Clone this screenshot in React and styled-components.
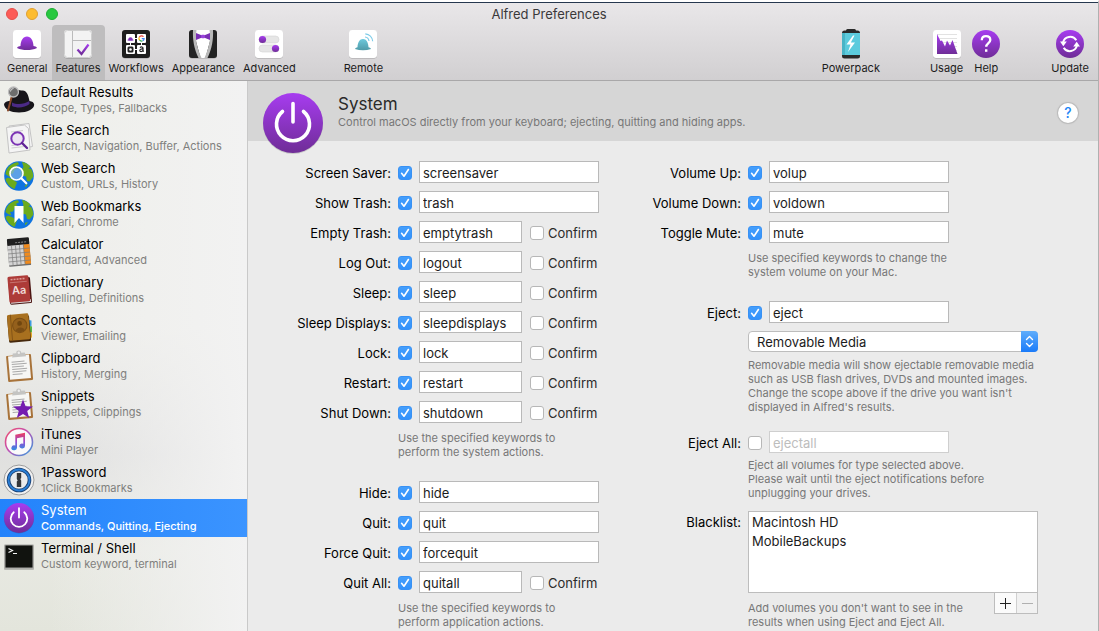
import React from "react";
import styled, { createGlobalStyle, css } from "styled-components";

const GlobalStyle = createGlobalStyle`
  *, *::before, *::after { box-sizing: border-box; }
  body {
    margin: 0;
    background: #ebebeb;
    color: #111;
    font: 13px/16px Inter, "Liberation Sans", sans-serif;
  }
  button, input, select { font: inherit; color: inherit; }
  svg { display: block; }
`;

const Window = styled.div`
  display: flex;
  flex-direction: column;
  min-height: 100vh;
  border-top: 2px solid #fff;
  border-right: 1px solid #b0b0b0;
`;

/* Title bar and toolbar */

const Chrome = styled.header`
  background: linear-gradient(#e9e7e9, #d1cfd1);
  border-top: 1px solid #26384f;
  border-bottom: 1px solid #a9a8a9;
`;

const TitleBar = styled.div`
  display: grid;
  grid-template-columns: 1fr auto 1fr;
  align-items: center;
  height: 22px;
  padding: 0 6px;
`;

const Lights = styled.div`
  display: flex;
  gap: 8px;
`;

const Light = styled.button`
  width: 12px;
  height: 12px;
  padding: 0;
  border: 1px solid ${(p) => p.$edge};
  border-radius: 50%;
  background: ${(p) => p.$color};
`;

const WindowTitle = styled.h1`
  margin: 0;
  font-size: 13px;
  line-height: 16px;
  font-weight: 400;
  color: #3a393a;
`;

const Toolbar = styled.nav`
  display: flex;
  height: 55px;
  padding: 0 5px 0 3px;
`;

const Tool = styled.button`
  display: flex;
  flex-direction: column;
  align-items: center;
  gap: 1px;
  padding: 4px 4px 0;
  border: 0;
  border-radius: 4px 4px 0 0;
  background: ${(p) => (p.$active ? "#bebdbe" : "none")};
  font-size: 11px;
  line-height: 16px;
  color: #1c1c1c;
`;

const ToolGap = styled.div`
  width: ${(p) => (p.$wide ? "42px" : "40px")};
`;

const ToolSpring = styled.div`
  flex: 1;
`;

/* Sidebar */

const Body = styled.div`
  display: flex;
  flex: 1;
`;

const Sidebar = styled.nav`
  flex: none;
  width: 248px;
  border-right: 1px solid #c9c9c9;
  background:
    linear-gradient(90deg, rgba(243, 243, 242, 0) 20%, #f2f2f2),
    linear-gradient(#eeefea, #eeeeea 45%, #e0e0df 68%, #e8e9e2 85%, #e3e5dc);
`;

const NavButton = styled.button`
  display: flex;
  align-items: center;
  gap: 7px;
  width: 100%;
  height: 38px;
  padding: 0 0 0 4px;
  border: 0;
  background: none;
  text-align: left;
  color: #000;
  ${(p) =>
    p.$active &&
    css`
      background: linear-gradient(90deg, #2383fb, #3b94ff);
      color: #fff;
    `}
`;

const NavText = styled.span`
  display: flex;
  flex-direction: column;
`;

const NavSub = styled.small`
  font-size: 11px;
  font-weight: ${(p) => (p.$active ? 500 : 400)};
  line-height: 16px;
  color: ${(p) => (p.$active ? "#fff" : "#7f7f7d")};
`;

/* Content */

const Content = styled.main`
  flex: 1;
  min-width: 0;
`;

const Banner = styled.section`
  display: flex;
  align-items: flex-start;
  height: 60px;
  padding: 12px 20px 0 15px;
  background: #d6d6d6;
`;

const BannerText = styled.div`
  flex: 1;
  padding-left: 15px;
`;

const Heading = styled.h2`
  margin: 0;
  font-size: 17px;
  line-height: 22px;
  font-weight: 400;
  color: #2a2a2a;
`;

const Summary = styled.p`
  margin: 0;
  font-size: 11px;
  line-height: 14px;
  color: #777;
`;

const HelpButton = styled.button`
  width: 20px;
  height: 20px;
  margin-top: 10px;
  padding: 0;
  border: 0;
  border-radius: 50%;
  background: #fff;
  box-shadow: 0 0 1px 1px #b9b9b9;
  font-size: 14px;
  font-weight: 500;
  line-height: 20px;
  color: #1d86f5;
`;

const Form = styled.form`
  display: grid;
  grid-template-columns: minmax(0, 8fr) minmax(0, 9fr);
  padding-top: 17px;
`;

const Column = styled.div`
  --label: ${(p) => p.$label};
  display: flex;
  flex-direction: column;
`;

const Row = styled.div`
  display: flex;
  align-items: center;
  gap: 7px;
  height: 30px;
`;

const Label = styled.label`
  flex: none;
  width: var(--label);
  text-align: right;
  white-space: nowrap;
  color: #000;
`;

const Indent = styled.div`
  max-width: 290px;
  margin-left: calc(var(--label) + 7px);
  ${(p) =>
    p.$fill &&
    css`
      width: 290px;
    `}
`;

const Note = styled.p`
  margin: 0 0 ${(p) => p.$after || "0"};
  padding-top: ${(p) => p.$before || "3px"};
  font-size: 11px;
  line-height: 14px;
  white-space: nowrap;
  color: #777;
`;

const Field = styled.input`
  width: ${(p) => (p.$short ? "103px" : "180px")};
  height: 22px;
  margin-bottom: 2px;
  padding: 1px 3px 0;
  border: 1px solid #b9b9b9;
  border-radius: 0;
  background: #fff;
  color: #1c1c1c;
  &:disabled {
    border-color: #cfcfcf;
    color: #bdbdbd;
  }
`;

const CheckWrap = styled.span`
  display: grid;
  flex: none;
  width: 14px;
  height: 14px;
  > * { grid-area: 1 / 1; }
  svg { pointer-events: none; }
`;

const CheckInput = styled.input`
  appearance: none;
  width: 14px;
  height: 14px;
  margin: 0;
  border: 1px solid #b7b7b7;
  border-radius: 3px;
  background: #fff;
  &:checked {
    border-color: #3891f4;
    background: linear-gradient(#459ffc, #3392fb);
  }
  & + svg { visibility: hidden; }
  &:checked + svg { visibility: visible; }
`;

const Confirm = styled.label`
  display: flex;
  align-items: center;
  gap: 4px;
  margin-left: 1px;
  color: #2a2a2a;
`;

const SelectWrap = styled.div`
  position: relative;
  display: flex;
  margin-top: 3px;
  svg {
    position: absolute;
    top: 0;
    right: 0;
    pointer-events: none;
  }
`;

const Select = styled.select`
  appearance: none;
  width: 100%;
  height: 21px;
  padding: 0 24px 0 8px;
  border: 1px solid #bdbdbd;
  border-radius: 4px;
  background: #fff;
  color: #1c1c1c;
`;

const ListRow = styled.div`
  display: flex;
  align-items: flex-start;
  gap: 7px;
  margin-top: 11px;
`;

const ListLabel = styled(Label).attrs({ as: "span" })`
  padding-top: 3px;
`;

const List = styled.ul`
  width: 290px;
  height: 82px;
  margin: 0;
  padding: 1px 3px;
  border: 1px solid #bdbdbd;
  background: #fff;
  list-style: none;
  line-height: 19px;
  color: #1c1c1c;
`;

const ListFoot = styled.div`
  display: flex;
  justify-content: space-between;
  align-items: flex-start;
`;

const Stepper = styled.div`
  display: flex;
  border: 1px solid #bdbdbd;
  border-top: 0;
`;

const StepButton = styled.button`
  display: grid;
  place-items: center;
  width: 21px;
  height: 20px;
  padding: 0;
  border: 0;
  background: #fbfbfb;
  color: #222;
  &:disabled {
    border-left: 1px solid #cfcfcf;
    background: #f1f1f1;
    color: #b0b0b0;
  }
`;

/* Drawings */

const DefsSvg = styled.svg`
  position: absolute;
`;

const Defs = () => (
  <DefsSvg width="0" height="0" aria-hidden="true">
    <defs>
      <linearGradient id="violet" x1="0" y1="0" x2="0" y2="1">
        <stop offset="0" stopColor="#a73cf0" />
        <stop offset="1" stopColor="#6f2d97" />
      </linearGradient>
      <linearGradient id="teal" x1="0" y1="0" x2="0" y2="1">
        <stop offset="0" stopColor="#6cc9dc" />
        <stop offset="1" stopColor="#4f9aa8" />
      </linearGradient>
      <linearGradient id="cap" x1="0" y1="0" x2="0" y2="1">
        <stop offset="0" stopColor="#5fadfb" />
        <stop offset="1" stopColor="#1a7bf9" />
      </linearGradient>
      <linearGradient id="tunesRing" x1="0" y1="0" x2="1" y2="1">
        <stop offset="0" stopColor="#f2506a" />
        <stop offset=".45" stopColor="#c14fb4" />
        <stop offset="1" stopColor="#2f9fe0" />
      </linearGradient>
      <linearGradient id="tunesNote" x1="0" y1="0" x2="0" y2="1">
        <stop offset="0" stopColor="#ee3f5c" />
        <stop offset=".5" stopColor="#9a4ad0" />
        <stop offset="1" stopColor="#2c8fe2" />
      </linearGradient>
    </defs>
  </DefsSvg>
);

const Tile = ({ fill = "#fff", children }) => (
  <svg width="30" height="30" viewBox="0 0 30 30">
    <rect x="1" y="1.6" width="28" height="28" rx="3" fill="#000" opacity=".25" />
    <rect x="1" y="1" width="28" height="28" rx="3" fill={fill} />
    {children}
  </svg>
);

const bowler = "M5 19c.6-1.5 2.200-1.800 3.500-2 .2-5.500 2.600-9.500 6.500-9.500s6.300 4 6.500 9.500c1.300.2 2.900.5 3.500 2-3 1.500-6.500 2-10 2s-7-.5-10-2z";

const toolIcons = {
  General: (
    <Tile>
      <path d={bowler} fill="url(#violet)" />
    </Tile>
  ),
  Features: (
    <Tile fill="#f3f3f3">
      <path d="M9.500 1V29M9.500 11.500H29" stroke="#bbb" fill="none" />
      <rect x="1.500" y="1.500" width="27" height="27" rx="3" fill="none" stroke="#cfcfcf" />
      <path d="M14.500 20.500l4 4.500 7-9.500" stroke="url(#violet)" strokeWidth="2.200" fill="none" />
    </Tile>
  ),
  Workflows: (
    <Tile fill="#1e1e1e">
      <path d="M12 9.500h6M12 20.500h6M9.500 12v6M20.500 12v6" stroke="#fff" />
      <g fill="#fff">
        <rect x="5" y="5" width="9" height="9" rx="1" />
        <rect x="16" y="5" width="9" height="9" rx="1" />
        <rect x="5" y="16" width="9" height="9" rx="1" />
        <rect x="16" y="16" width="9" height="9" rx="1" />
      </g>
      <path d="M6.300 11.200c.4-.8 1-.8 1-.8.1-3 4.300-3 4.400 0 0 0 .6 0 1 .8-2 .8-4.400.8-6.400 0z" fill="#8133b8" />
      <path d="M22.500 7.700a2.600 2.600 0 0 0-4.200.5" stroke="#e8453c" fill="none" strokeWidth="1.200" />
      <path d="M18.300 8.200a2.600 2.600 0 0 0 .3 3" stroke="#f4b400" fill="none" strokeWidth="1.200" />
      <path d="M18.600 11.200a2.500 2.500 0 0 0 3 .6" stroke="#34a853" fill="none" strokeWidth="1.200" />
      <path d="M20.800 9.700h2.300c0 .8-.4 1.700-1.300 2.100" stroke="#4285f4" fill="none" strokeWidth="1.200" />
      <rect x="6.500" y="17.500" width="6" height="6" rx="1.500" fill="#222" />
      <circle cx="9.500" cy="20.500" r="1.300" fill="#fff" />
      <path d="M19 18.600c1-1 3-.8 3 .6v2.500l.7 1M22 20c-2-.2-3.200.3-3.200 1.500 0 1.400 2.200 1.600 3.200-.2" stroke="#222" fill="none" strokeWidth="1.200" />
    </Tile>
  ),
  Appearance: (
    <Tile fill="#232323">
      <path d="M5 1h20L17.500 29h-5z" fill="#fff" />
      <path d="M5 1h3.500c-1.500 9 .5 18 5 28h-3C6 20 4.500 10 5 1zM25 1h-3.500c1.500 9-.5 18-5 28h3C24 20 25.500 10 25 1z" fill="#b9b9b9" />
      <path d="M8 4l5.500 2.200h3L22 4v7l-5.500-2.200h-3L8 11z" fill="#7a2fb5" />
      <rect x="13.200" y="5.700" width="3.600" height="3.600" rx=".8" fill="#9a44dc" />
    </Tile>
  ),
  Advanced: (
    <Tile>
      <rect x="5" y="7" width="20" height="7" rx="3.500" fill="#e6e6e6" stroke="#d4d4d4" strokeWidth=".6" />
      <rect x="5" y="16" width="20" height="7" rx="3.500" fill="#e6e6e6" stroke="#d4d4d4" strokeWidth=".6" />
      <circle cx="8.500" cy="10.500" r="3.600" fill="url(#violet)" />
      <circle cx="21.500" cy="19.500" r="3.600" fill="url(#violet)" />
    </Tile>
  ),
  Remote: (
    <Tile>
      <path d="M7 20c.5-1.200 1.500-1.500 2.500-1.700.2-5 2.200-8.300 5.500-8.300s5.300 3.300 5.500 8.300c1 .2 2 .5 2.500 1.700-5 1.600-11 1.600-16 0z" fill="url(#teal)" />
      <path d="M17 8c2 .2 3.700 1.900 4 4M17.300 4.800c4 .4 7 3.400 7.400 7.400" stroke="#7ccbe8" strokeWidth="1.200" fill="none" />
    </Tile>
  ),
  Powerpack: (
    <svg width="30" height="30" viewBox="0 0 30 30">
      <rect x="10" y="0" width="10" height="4" rx="1.500" fill="#2a2a2a" />
      <rect x="6" y="1.500" width="18" height="28" rx="2.500" fill="#2a2a2a" />
      <rect x="6" y="4" width="18" height="22" fill="#5ccbdd" />
      <rect x="6" y="4" width="3" height="22" fill="#49b4c6" />
      <path d="M17 6.500l-6.500 9h4L12 23l7-9.500h-4.200L18.500 6.500z" fill="#fff" />
    </svg>
  ),
  Usage: (
    <Tile>
      <path d="M5 5.500h20M5 9.500h20M5 13.500h20M5 17.500h20M5 21.500h20" stroke="#e2e2e2" />
      <path d="M5 5l3.500 7 1.500-.5 3 6 2-6 3 5 2.500-5.500 5 14H5z" fill="url(#violet)" />
    </Tile>
  ),
  Help: (
    <svg width="30" height="30" viewBox="0 0 30 30">
      <circle cx="15" cy="15" r="14" fill="url(#violet)" />
      <path d="M10.800 11.200c0-2.600 1.800-4 4.200-4s4.300 1.400 4.300 3.700c0 3.100-4.100 3.200-4.100 6.900" stroke="#fff" strokeWidth="2.300" fill="none" />
      <rect x="14" y="20.300" width="2.400" height="2.500" fill="#fff" />
    </svg>
  ),
  Update: (
    <svg width="30" height="30" viewBox="0 0 30 30">
      <circle cx="15" cy="15" r="14" fill="url(#violet)" />
      <path d="M21.300 11.300A7.300 7.300 0 0 0 8 13.600M8.700 18.700A7.300 7.300 0 0 0 22 16.400" stroke="#fff" strokeWidth="2" fill="none" />
      <path d="M5 12.600h6.800l-3.500 4.600zM25 17.400h-6.800l3.500-4.600z" fill="#fff" />
    </svg>
  ),
};

const IconSvg = styled.svg`
  flex: none;
  overflow: visible;
`;

const Icon = ({ children }) => (
  <IconSvg width="30" height="30" viewBox="0 0 30 30" aria-hidden="true">
    {children}
  </IconSvg>
);

const Globe = ({ children }) => (
  <Icon>
    <circle cx="15" cy="15" r="14.800" fill="#0f74e0" />
    <path d="M6 4.500C8.500 2.500 12 1 14 1.200l1 2-3 1.800 1.500 2-3 2-1.500 3.500-3 .5 1.500 3.500-3.500-1.500-2.500-2C2 9 3.700 6.500 6 4.500zM18 1c3 .4 6.500 2.300 8.500 4.800l-2 1.700 2.700.5c1.500 2.500 2 5 1.900 8l-3.600 4.500-2.500-.5-1-4.500-4.500-1-.5-5 2.500-3.500zM4 16.500l5 2 4 3-2.500 6.500C6 26 2.500 22.500 1.500 18zM21 24l3-1-2.500 3.500z" fill="#6cab1d" />
    {children}
  </Icon>
);

const Clip = ({ children }) => (
  <Icon>
    <g transform="rotate(-5 15 16)">
      <rect x="3" y="4" width="25" height="26" rx="1" fill="#a8733a" />
      <rect x="5" y="4.500" width="21" height="23.500" fill="#f6f6f4" />
      <path d="M10 2h3.500a2.500 2.500 0 0 1 5 0H22l1 4H9z" fill="#c4c4c2" />
      <circle cx="16" cy="1.800" r="1.200" fill="#f0f0f0" />
      <path d="M8 10.500h13M8 13h15M8 15.500h12M8 18h15M8 20.500h14M8 23h10" stroke="#a9a9a9" strokeWidth="1" />
    </g>
    {children}
  </Icon>
);

const Power = ({ size }) => (
  <IconSvg width={size} height={size} viewBox="0 0 60 60" aria-hidden="true">
    <circle cx="30" cy="31" r="30" fill="#000" opacity=".15" />
    <circle cx="30" cy="30" r="30" fill="url(#violet)" />
    <path d="M19.500 18.500a16.500 16.500 0 1 0 21 0M30 10.500V29" stroke="#fff" strokeWidth="3.600" strokeLinecap="round" fill="none" />
  </IconSvg>
);

const navIcons = {
  hat: (
    <Icon>
      <path d="M0 19c1-2.500 4-3 7-3 .5-5 2.500-10 6-10.800 2-.6 3 .6 5 .3 4-.8 6.500 4 7.500 10.500 2.500.3 4.500 1.500 4.700 3.500.1 4.500-7 8-15.200 8S0 24 0 19z" fill="#17151a" />
      <path d="M8 17.500c5 2.500 12 2 17.300-1.500l.3 3c-5 3.800-12 4.500-17.600 2z" fill="#4b2a86" />
      <path d="M7.500 12.500L4 25.500" stroke="#8a4a2a" strokeWidth="2" strokeLinecap="round" />
      <circle cx="9.500" cy="7" r="5" fill="#6d6d6d" stroke="#bdbdbd" strokeWidth="1.300" />
      <path d="M6.500 6.500a3 3 0 0 1 3-3" stroke="#ddd" fill="none" />
    </Icon>
  ),
  file: (
    <Icon>
      <g stroke="#c4c4c4" fill="#f5f5f5">
        <path d="M5 3l20-2.500 3.500 23L9 27z" />
        <path d="M2.500 4.500l18-2.500 4 3.500 1.500 21.500L5 30z" />
      </g>
      <path d="M7 9l12-1.500M7 12l4-.5M7.500 22.500l5-.5M7.500 25l13-1.500" stroke="#cfcfcf" />
      <circle cx="13.500" cy="15.500" r="6.200" fill="#ece6f2" stroke="#7b33b4" strokeWidth="2" />
      <path d="M18 20l5 5" stroke="#5f2494" strokeWidth="2.400" strokeLinecap="round" />
    </Icon>
  ),
  globeSearch: (
    <Globe>
      <circle cx="12.500" cy="12.500" r="6.500" fill="#7fb4e8" fillOpacity=".7" stroke="#fff" strokeWidth="1.600" />
      <path d="M17.300 17.300l5 5" stroke="#fff" strokeWidth="2.200" strokeLinecap="round" />
    </Globe>
  ),
  globeMark: (
    <Globe>
      <path d="M10.500 7h9v17l-4.500-5-4.500 5z" fill="#fff" />
    </Globe>
  ),
  calculator: (
    <Icon>
      <g transform="rotate(-5 15 15)">
        <rect x="4" y="2" width="22" height="27" rx="1" fill="#6e6e6e" />
        <rect x="4" y="1" width="22" height="7" rx="1" fill="#1f1f1f" />
        <path d="M12 5.500h12" stroke="#8b8b8b" strokeDasharray="2 1" />
        <rect x="4" y="8" width="16" height="19.500" fill="#d4d4d4" />
        <rect x="20" y="8" width="6" height="19.500" fill="#f08a1c" />
        <path d="M4 12h22M4 16h22M4 20h22M4 24h22M8 8v20M12 8v20M16 8v20M20 8v20" stroke="#7d7d7d" strokeWidth=".7" />
      </g>
    </Icon>
  ),
  dictionary: (
    <Icon>
      <g transform="rotate(-5 15 15)">
        <rect x="5" y="3" width="22" height="26" rx="1.500" fill="#4c1613" />
        <rect x="6" y="25" width="20" height="3" fill="#ddd" />
        <rect x="4.500" y="1" width="21" height="26" rx="1.500" fill="#ad3b38" />
        <path d="M7.500 4h15" stroke="#dc9a95" strokeWidth="1.600" strokeDasharray="2 1" />
        <path d="M6.500 7h17" stroke="#d08884" strokeWidth=".7" />
        <text x="15" y="19" textAnchor="middle" fontFamily="Inter, sans-serif" fontSize="11" fontWeight="600" fill="#f0dcd8">Aa</text>
      </g>
    </Icon>
  ),
  contacts: (
    <Icon>
      <path d="M24.500 7l3 .5v6l-2 .5z" fill="#3c9be0" />
      <path d="M25.500 13l2.500.5v6l-2 .5z" fill="#58b847" />
      <path d="M26 19l2 .5v5l-2 .5z" fill="#e6a92c" />
      <g transform="rotate(-5 15 15)">
        <rect x="4" y="3" width="22" height="26" rx="1.500" fill="#46290d" />
        <rect x="4" y="1" width="21.500" height="26" rx="1.500" fill="#a8701f" />
        <path d="M7.500 1v26" stroke="#7d4e14" strokeWidth=".8" />
        <circle cx="16" cy="12.500" r="7.200" fill="#94601c" stroke="#7a4d14" />
        <circle cx="16" cy="10.500" r="2.400" fill="#70460f" />
        <path d="M11.500 17.500c.5-4 8.500-4 9 0-2.500 2.300-6.500 2.300-9 0z" fill="#7a4d14" />
      </g>
    </Icon>
  ),
  clipboard: <Clip />,
  snippets: (
    <Clip>
      <path d="M19 10.500l2.600 6.700 7.400.4-5.800 4.400 2 7-6.200-4-6.200 4 2-7L9 17.600l7.400-.4z" fill="#741cb0" />
    </Clip>
  ),
  itunes: (
    <Icon>
      <circle cx="15" cy="15" r="13.500" fill="#fafafa" stroke="url(#tunesRing)" strokeWidth="1.600" />
      <path d="M11.300 7.800l9.700-2v13.200a2.800 2.400 0 1 1-1.700-2.200V10l-6.300 1.300v9.500a2.800 2.400 0 1 1-1.700-2.200z" fill="url(#tunesNote)" />
    </Icon>
  ),
  onepassword: (
    <Icon>
      <circle cx="15" cy="15" r="15" fill="#f1f1f1" stroke="#9b9b9b" />
      <circle cx="15" cy="15" r="10.500" fill="#e9ebed" stroke="#173f73" strokeWidth="3.600" />
      <circle cx="15" cy="15" r="10.500" fill="none" stroke="#2a7fd6" strokeWidth="1.800" />
      <path d="M12.800 8h4.400v5l-.9 1 .9 1.500V22h-4.400v-5.500l.9-1-.9-1.500z" fill="#33363a" />
    </Icon>
  ),
  power: <Power size={30} />,
  terminal: (
    <Icon>
      <rect x="0" y="4" width="30" height="25" rx="1" fill="#000" opacity=".2" />
      <rect x="1" y="4" width="28" height="23" fill="#11130f" stroke="#a3a3a0" />
      <path d="M4.500 7.500l4 2-4 2M9 12.500h4" stroke="#f4f4f4" strokeWidth="1.200" fill="none" />
    </Icon>
  ),
};

/* Data */

const navItems = [
  ["hat", "Default Results", "Scope, Types, Fallbacks"],
  ["file", "File Search", "Search, Navigation, Buffer, Actions"],
  ["globeSearch", "Web Search", "Custom, URLs, History"],
  ["globeMark", "Web Bookmarks", "Safari, Chrome"],
  ["calculator", "Calculator", "Standard, Advanced"],
  ["dictionary", "Dictionary", "Spelling, Definitions"],
  ["contacts", "Contacts", "Viewer, Emailing"],
  ["clipboard", "Clipboard", "History, Merging"],
  ["snippets", "Snippets", "Snippets, Clippings"],
  ["itunes", "iTunes", "Mini Player"],
  ["onepassword", "1Password", "1Click Bookmarks"],
  ["power", "System", "Commands, Quitting, Ejecting"],
  ["terminal", "Terminal / Shell", "Custom keyword, terminal"],
];

const systemCommands = [
  ["Screen Saver", "screensaver"],
  ["Show Trash", "trash"],
  ["Empty Trash", "emptytrash", true],
  ["Log Out", "logout", true],
  ["Sleep", "sleep", true],
  ["Sleep Displays", "sleepdisplays", true],
  ["Lock", "lock", true],
  ["Restart", "restart", true],
  ["Shut Down", "shutdown", true],
];

const appCommands = [
  ["Hide", "hide"],
  ["Quit", "quit"],
  ["Force Quit", "forcequit"],
  ["Quit All", "quitall", true],
];

const volumeCommands = [
  ["Volume Up", "volup"],
  ["Volume Down", "voldown"],
  ["Toggle Mute", "mute"],
];

/* Parts */

const Check = (props) => (
  <CheckWrap>
    <CheckInput type="checkbox" {...props} />
    <svg width="14" height="14" viewBox="0 0 14 14" aria-hidden="true">
      <path d="M3.600 7.300l2.400 2.900 4.400-6.700" stroke="#fff" strokeWidth="1.600" strokeLinecap="round" strokeLinejoin="round" fill="none" />
    </svg>
  </CheckWrap>
);

const ToolItem = ({ name, active }) => (
  <Tool type="button" $active={active}>
    {toolIcons[name]}
    {name}
  </Tool>
);

const Command = ({ label, keyword, confirm, off }) => (
  <Row>
    <Label htmlFor={`on-${keyword}`}>{label}:</Label>
    <Check id={`on-${keyword}`} defaultChecked={!off} />
    <Field type="text" aria-label={`${label} keyword`} defaultValue={keyword} $short={confirm} disabled={off} />
    {confirm && (
      <Confirm>
        <Check />
        Confirm
      </Confirm>
    )}
  </Row>
);

const Commands = ({ items }) =>
  items.map(([label, keyword, confirm]) => (
    <Command key={keyword} label={label} keyword={keyword} confirm={confirm} />
  ));

export default function App() {
  return (
    <Window>
      <GlobalStyle />
      <Defs />
      <Chrome>
        <TitleBar>
          <Lights>
            <Light aria-label="Close" $color="#fc5b57" $edge="#e5504b" />
            <Light aria-label="Minimize" $color="#fdbc2f" $edge="#e0a032" />
            <Light aria-label="Zoom" $color="#28c840" $edge="#1eae35" />
          </Lights>
          <WindowTitle>Alfred Preferences</WindowTitle>
        </TitleBar>
        <Toolbar aria-label="Sections">
          <ToolItem name="General" />
          <ToolItem name="Features" active />
          <ToolItem name="Workflows" />
          <ToolItem name="Appearance" />
          <ToolItem name="Advanced" />
          <ToolGap />
          <ToolItem name="Remote" />
          <ToolSpring />
          <ToolItem name="Powerpack" />
          <ToolGap $wide />
          <ToolItem name="Usage" />
          <ToolItem name="Help" />
          <ToolGap $wide />
          <ToolItem name="Update" />
        </Toolbar>
      </Chrome>
      <Body>
        <Sidebar aria-label="Features">
          {navItems.map(([icon, title, sub]) => {
            const active = title === "System";
            return (
              <NavButton key={title} type="button" $active={active}>
                {navIcons[icon]}
                <NavText>
                  {title}
                  <NavSub $active={active}>{sub}</NavSub>
                </NavText>
              </NavButton>
            );
          })}
        </Sidebar>
        <Content>
          <Banner>
            <Power size={60} />
            <BannerText>
              <Heading>System</Heading>
              <Summary>Control macOS directly from your keyboard; ejecting, quitting and hiding apps.</Summary>
            </BannerText>
            <HelpButton type="button" aria-label="Help">?</HelpButton>
          </Banner>
          <Form>
            <Column $label="143px">
              <Commands items={systemCommands} />
              <Indent>
                <Note $after="19px">
                  Use the specified keywords to
                  <br />
                  perform the system actions.
                </Note>
              </Indent>
              <Commands items={appCommands} />
              <Indent>
                <Note>
                  Use the specified keywords to
                  <br />
                  perform application actions.
                </Note>
              </Indent>
            </Column>
            <Column $label="93px">
              <Commands items={volumeCommands} />
              <Indent>
                <Note $after="19px">
                  Use specified keywords to change the
                  <br />
                  system volume on your Mac.
                </Note>
              </Indent>
              <Command label="Eject" keyword="eject" />
              <Indent $fill>
                <SelectWrap>
                  <Select aria-label="Eject scope" defaultValue="removable">
                    <option value="removable">Removable Media</option>
                  </Select>
                  <svg width="17" height="21" viewBox="0 0 17 21" aria-hidden="true">
                    <path d="M0 0h13a4 4 0 0 1 4 4v13a4 4 0 0 1-4 4H0z" fill="url(#cap)" />
                    <path d="M5.500 8.500l3-3 3 3M5.500 12.500l3 3 3-3" stroke="#fff" strokeWidth="1.400" strokeLinecap="round" strokeLinejoin="round" fill="none" />
                  </svg>
                </SelectWrap>
                <Note $before="6px" $after="14px">
                  Removable media will show ejectable removable media
                  <br />
                  such as USB flash drives, DVDs and mounted images.
                  <br />
                  Change the scope above if the drive you want isn't
                  <br />
                  displayed in Alfred's results.
                </Note>
              </Indent>
              <Command label="Eject All" keyword="ejectall" off />
              <Indent>
                <Note $before="0px">
                  Eject all volumes for type selected above.
                  <br />
                  Please wait until the eject notifications before
                  <br />
                  unplugging your drives.
                </Note>
              </Indent>
              <ListRow>
                <ListLabel id="blacklist-label">Blacklist:</ListLabel>
                <List aria-labelledby="blacklist-label">
                  <li>Macintosh HD</li>
                  <li>MobileBackups</li>
                </List>
              </ListRow>
              <Indent $fill>
                <ListFoot>
                  <Note $before="8px">
                    Add volumes you don't want to see in the
                    <br />
                    results when using Eject and Eject All.
                  </Note>
                  <Stepper>
                    <StepButton type="button" aria-label="Add volume">
                      <svg width="11" height="11" viewBox="0 0 11 11"><path d="M0 5.500h11M5.500 0v11" stroke="currentColor" /></svg>
                    </StepButton>
                    <StepButton type="button" aria-label="Remove volume" disabled>
                      <svg width="11" height="11" viewBox="0 0 11 11"><path d="M0 5.500h11" stroke="currentColor" /></svg>
                    </StepButton>
                  </Stepper>
                </ListFoot>
              </Indent>
            </Column>
          </Form>
        </Content>
      </Body>
    </Window>
  );
}
